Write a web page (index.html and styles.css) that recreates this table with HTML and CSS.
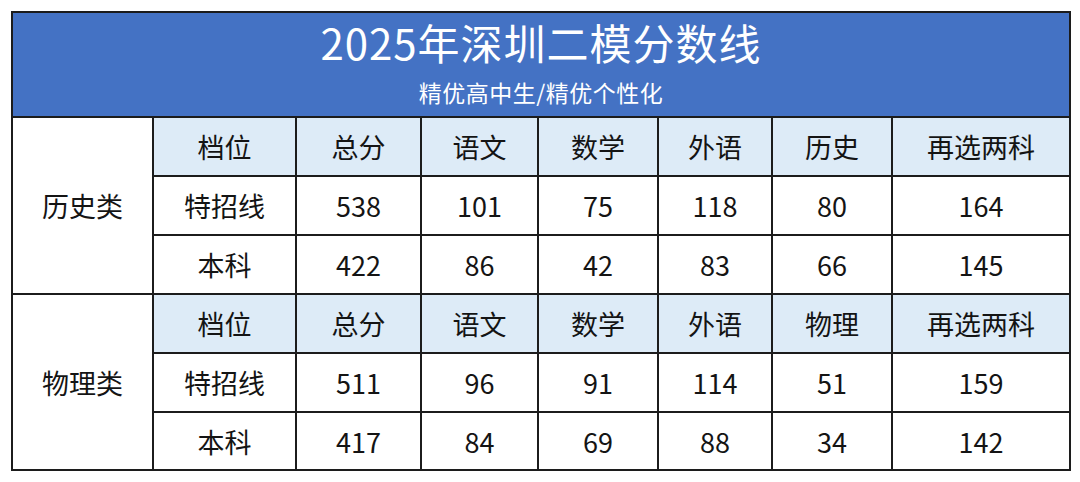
FILE: index.html
```html
<!DOCTYPE html>
<html lang="zh-CN">
<head>
<meta charset="utf-8">
<title>2025年深圳二模分数线</title>
<link rel="stylesheet" href="styles.css">
</head>
<body>
<div class="page">
<table class="score">
  <colgroup>
    <col class="c-cat"><col class="c-level"><col class="c-total"><col class="c-cn">
    <col class="c-math"><col class="c-en"><col class="c-sub"><col class="c-two">
  </colgroup>
  <tr class="banner">
    <td colspan="8">
      <div class="title">2025年深圳二模分数线</div>
      <div class="subtitle">精优高中生/精优个性化</div>
    </td>
  </tr>
  <tr class="head">
    <td class="cat" rowspan="3">历史类</td>
    <td>档位</td><td>总分</td><td>语文</td><td>数学</td><td>外语</td><td>历史</td><td>再选两科</td>
  </tr>
  <tr>
    <td>特招线</td><td>538</td><td>101</td><td>75</td><td>118</td><td>80</td><td>164</td>
  </tr>
  <tr>
    <td>本科</td><td>422</td><td>86</td><td>42</td><td>83</td><td>66</td><td>145</td>
  </tr>
  <tr class="head">
    <td class="cat" rowspan="3">物理类</td>
    <td>档位</td><td>总分</td><td>语文</td><td>数学</td><td>外语</td><td>物理</td><td>再选两科</td>
  </tr>
  <tr>
    <td>特招线</td><td>511</td><td>96</td><td>91</td><td>114</td><td>51</td><td>159</td>
  </tr>
  <tr class="last">
    <td>本科</td><td>417</td><td>84</td><td>69</td><td>88</td><td>34</td><td>142</td>
  </tr>
</table>
</div>
</body>
</html>
```

FILE: styles.css
```css
html, body {
  margin: 0;
  padding: 0;
  background: #ffffff;
}

.page {
  padding: 11px 0 0 11px;
}

.score {
  border-collapse: collapse;
  table-layout: fixed;
  width: 1058px;
  font-family: "Noto Sans CJK SC", "Noto Sans", sans-serif;
  color: #141414;
}

.c-cat { width: 141px; }
.c-level { width: 143px; }
.c-total { width: 125px; }
.c-cn { width: 117px; }
.c-math { width: 120px; }
.c-en { width: 114px; }
.c-sub { width: 120px; }
.c-two { width: 178px; }

.score td {
  border: 2px solid #1c1c1c;
  text-align: center;
  vertical-align: middle;
  font-size: 27px;
  height: 57px;
  padding: 0;
  line-height: 1;
}

.score .banner td {
  background: #4472c4;
  color: #ffffff;
  height: 103px;
  padding: 0;
}

.title {
  font-size: 42px;
  line-height: 1;
  letter-spacing: 1px;
  margin-top: -4px;
}

.subtitle {
  font-size: 23px;
  line-height: 1;
  margin-top: 18px;
  letter-spacing: 0.5px;
}

.score .head td {
  background: #ddebf7;
}

.score .head td.cat {
  background: #ffffff;
}

.score .last td {
  height: 56px;
}
```
